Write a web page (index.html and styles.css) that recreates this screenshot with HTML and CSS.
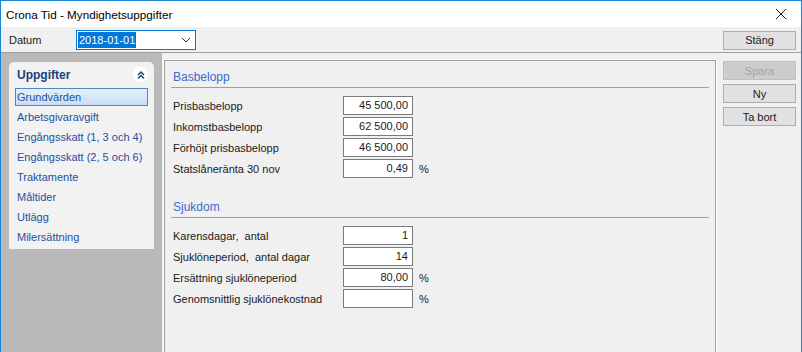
FILE: index.html
```html
<html>
  <head>
    <title>Crona Tid - Myndighetsuppgifter</title>
    <meta name="viewport" content="width=device-width, initial-scale=1">
    <link rel="stylesheet" href="styles.css">
  </head>

  <body>
    <div class="window">
      <div class="titlebar">
        <span class="title">Crona Tid - Myndighetsuppgifter</span>
        <svg class="close" width="12" height="12" viewBox="0 0 12 12">
          <path d="M1 1 L11 11 M11 1 L1 11" stroke="#1a1a1a" stroke-width="1" fill="none"/>
        </svg>
      </div>

      <div class="toolbar">
        <span class="datum-label">Datum</span>
        <div class="combo">
          <span class="combo-value">2018-01-01</span>
          <svg class="combo-arrow" width="10" height="6" viewBox="0 0 10 6">
            <polyline points="1,1 5,5 9,1" stroke="#333" stroke-width="1" fill="none"/>
          </svg>
        </div>
        <div class="spacer"></div>
        <button class="button close-btn">Stäng</button>
      </div>

      <div class="main">
        <!-- ----------------------------------- Task pane -->
        <div class="sidebar">
          <div class="taskpane">
            <div class="taskpane-head">
              <b>Uppgifter</b>
              <span class="collapse">
                <svg width="10" height="10" viewBox="0 0 10 10">
                  <polyline points="2,5 5,2 8,5" stroke="#1b3f7c" stroke-width="1.5" fill="none"/>
                  <polyline points="2,8.5 5,5.5 8,8.5" stroke="#1b3f7c" stroke-width="1.5" fill="none"/>
                </svg>
              </span>
            </div>
            <div class="task selected">Grundvärden</div>
            <div class="task">Arbetsgivaravgift</div>
            <div class="task">Engångsskatt (1, 3 och 4)</div>
            <div class="task">Engångsskatt (2, 5 och 6)</div>
            <div class="task">Traktamente</div>
            <div class="task">Måltider</div>
            <div class="task">Utlägg</div>
            <div class="task">Milersättning</div>
          </div>
        </div>

        <!-- ----------------------------------- Form -->
        <div class="content">
          <div class="section-title first">Basbelopp</div>
          <div class="rows">
            <div class="row"><span class="label">Prisbasbelopp</span><span class="field">45 500,00</span></div>
            <div class="row"><span class="label">Inkomstbasbelopp</span><span class="field">62 500,00</span></div>
            <div class="row"><span class="label">Förhöjt prisbasbelopp</span><span class="field">46 500,00</span></div>
            <div class="row"><span class="label">Statslåneränta 30 nov</span><span class="field">0,49</span><span class="unit">%</span></div>
          </div>

          <div class="section-title">Sjukdom</div>
          <div class="rows">
            <div class="row"><span class="label">Karensdagar,&nbsp; antal</span><span class="field">1</span></div>
            <div class="row"><span class="label">Sjuklöneperiod,&nbsp; antal dagar</span><span class="field">14</span></div>
            <div class="row"><span class="label">Ersättning sjuklöneperiod</span><span class="field">80,00</span><span class="unit">%</span></div>
            <div class="row"><span class="label">Genomsnittlig sjuklönekostnad</span><span class="field"></span><span class="unit">%</span></div>
          </div>
        </div>

        <!-- ----------------------------------- Buttons -->
        <div class="actions">
          <button class="button disabled">Spara</button>
          <button class="button">Ny</button>
          <button class="button">Ta bort</button>
        </div>
      </div>
    </div>
  </body>
</html>
```

FILE: styles.css
```css
body {
  margin: 0;
  font-family: "Liberation Sans", Arial, sans-serif;
  font-size: 11px;
  color: #1a1a1a;
  overflow: hidden;
}

.window {
  width: 802px;
  height: 360px;
  box-sizing: border-box;
  border: 1px solid #1883d7; /* window frame */
  border-bottom: none;
  background-color: #f0f0f0;
}

/* ----------------------------------- Title bar */
.titlebar {
  height: 26px;
  background-color: #ffffff;
  display: flex;
  align-items: center;
  padding-left: 5px;
}

.title {
  font-size: 11.7px;
  color: #000;
}

.close {
  margin-left: auto;
  margin-right: 14px;
}
/* ----------------------------------- */

/* ----------------------------------- Toolbar */
.toolbar {
  height: 26px;
  box-sizing: border-box;
  display: flex;
  align-items: center;
  padding: 0 5px 0 8px;
  border-bottom: 1px solid #a0a0a0;
}

.datum-label {
  width: 67px;
}

.combo {
  width: 120px;
  height: 20px;
  box-sizing: border-box;
  border: 1px solid #0078d7;
  background-color: #fff;
  display: flex;
  align-items: center;
  padding-left: 1px;
  margin-top: 1px;
}

.combo-value {
  background-color: #0078d7;
  color: #fff;
  padding: 0 1px;
  line-height: 16px;
}

.combo-arrow {
  margin-left: auto;
  margin-right: 4px;
}

.spacer {
  flex: 1;
}

.button {
  display: block;
  width: 73px;
  height: 19px;
  padding: 0;
  font-family: "Liberation Sans", Arial, sans-serif;
  font-size: 11px;
  color: #1a1a1a;
  background-color: #e1e1e1;
  border: 1px solid #adadad;
}

.close-btn {
  margin-top: 1px;
}

.button.disabled {
  color: #a3a3a3;
  background-color: #cccccc;
  border-color: #bfbfbf;
}
/* ----------------------------------- */

.main {
  display: flex;
  height: 300px;
}

/* ----------------------------------- Task pane */
.sidebar {
  width: 161px;
  background-color: #bababa;
  padding: 9px 0 0 8px;
  box-sizing: border-box;
}

.taskpane {
  width: 145px;
  height: 187px;
  background-color: #f2f2f2;
  border-radius: 5px 5px 0 0;
}

.taskpane-head {
  height: 25px;
  display: flex;
  align-items: center;
  padding: 0 6px 0 8px;
  font-size: 12px;
  color: #1b3f7c;
}

.collapse {
  margin-left: auto;
  width: 15px;
  height: 15px;
  border-radius: 50%;
  background-color: #fff;
  display: flex;
  align-items: center;
  justify-content: center;
}

.task {
  height: 20px;
  box-sizing: border-box;
  line-height: 18px;
  margin: 0 6px;
  padding-left: 1px;
  border: 1px solid transparent;
  color: #1f4f9e;
}

.task.selected {
  border-color: #4f86c6;
  background: linear-gradient(#e6f0fb, #c9def5);
  height: 18px;
  line-height: 16px;
  margin-top: 1px;
  margin-bottom: 1px;
}
/* ----------------------------------- */

/* ----------------------------------- Form */
.content {
  width: 552px;
  margin: 7px 0 0 2px;
  box-sizing: border-box;
  border: 1px solid #a0a0a0;
  border-bottom: none;
  box-shadow: -1px 0 0 #fff, 1px 0 0 #fff, 0 -1px 0 #fff;
  padding: 0 6px 0 6px;
}

.section-title {
  margin-top: 21px;
  padding: 0 0 2px 2px;
  line-height: 16px;
  font-size: 12px;
  color: #3a6ccf;
  border-bottom: 1px solid #a0a0a0;
}

.section-title.first {
  margin-top: 8px;
}

.rows {
  margin-top: 8px;
  display: flex;
  flex-direction: column;
  gap: 2px;
}

.row {
  display: flex;
  align-items: center;
  height: 19px;
  padding-left: 2px;
}

.label {
  width: 170px;
}

.field {
  width: 70px;
  height: 19px;
  box-sizing: border-box;
  border: 1px solid #7a7a7a;
  background-color: #fff;
  text-align: right;
  padding-right: 4px;
  line-height: 17px;
}

.unit {
  margin-left: 6px;
}
/* ----------------------------------- */

/* ----------------------------------- Buttons */
.actions {
  flex: 1;
  padding: 8px 0 0 7px;
  display: flex;
  flex-direction: column;
  gap: 4px;
}
/* ----------------------------------- */
```
